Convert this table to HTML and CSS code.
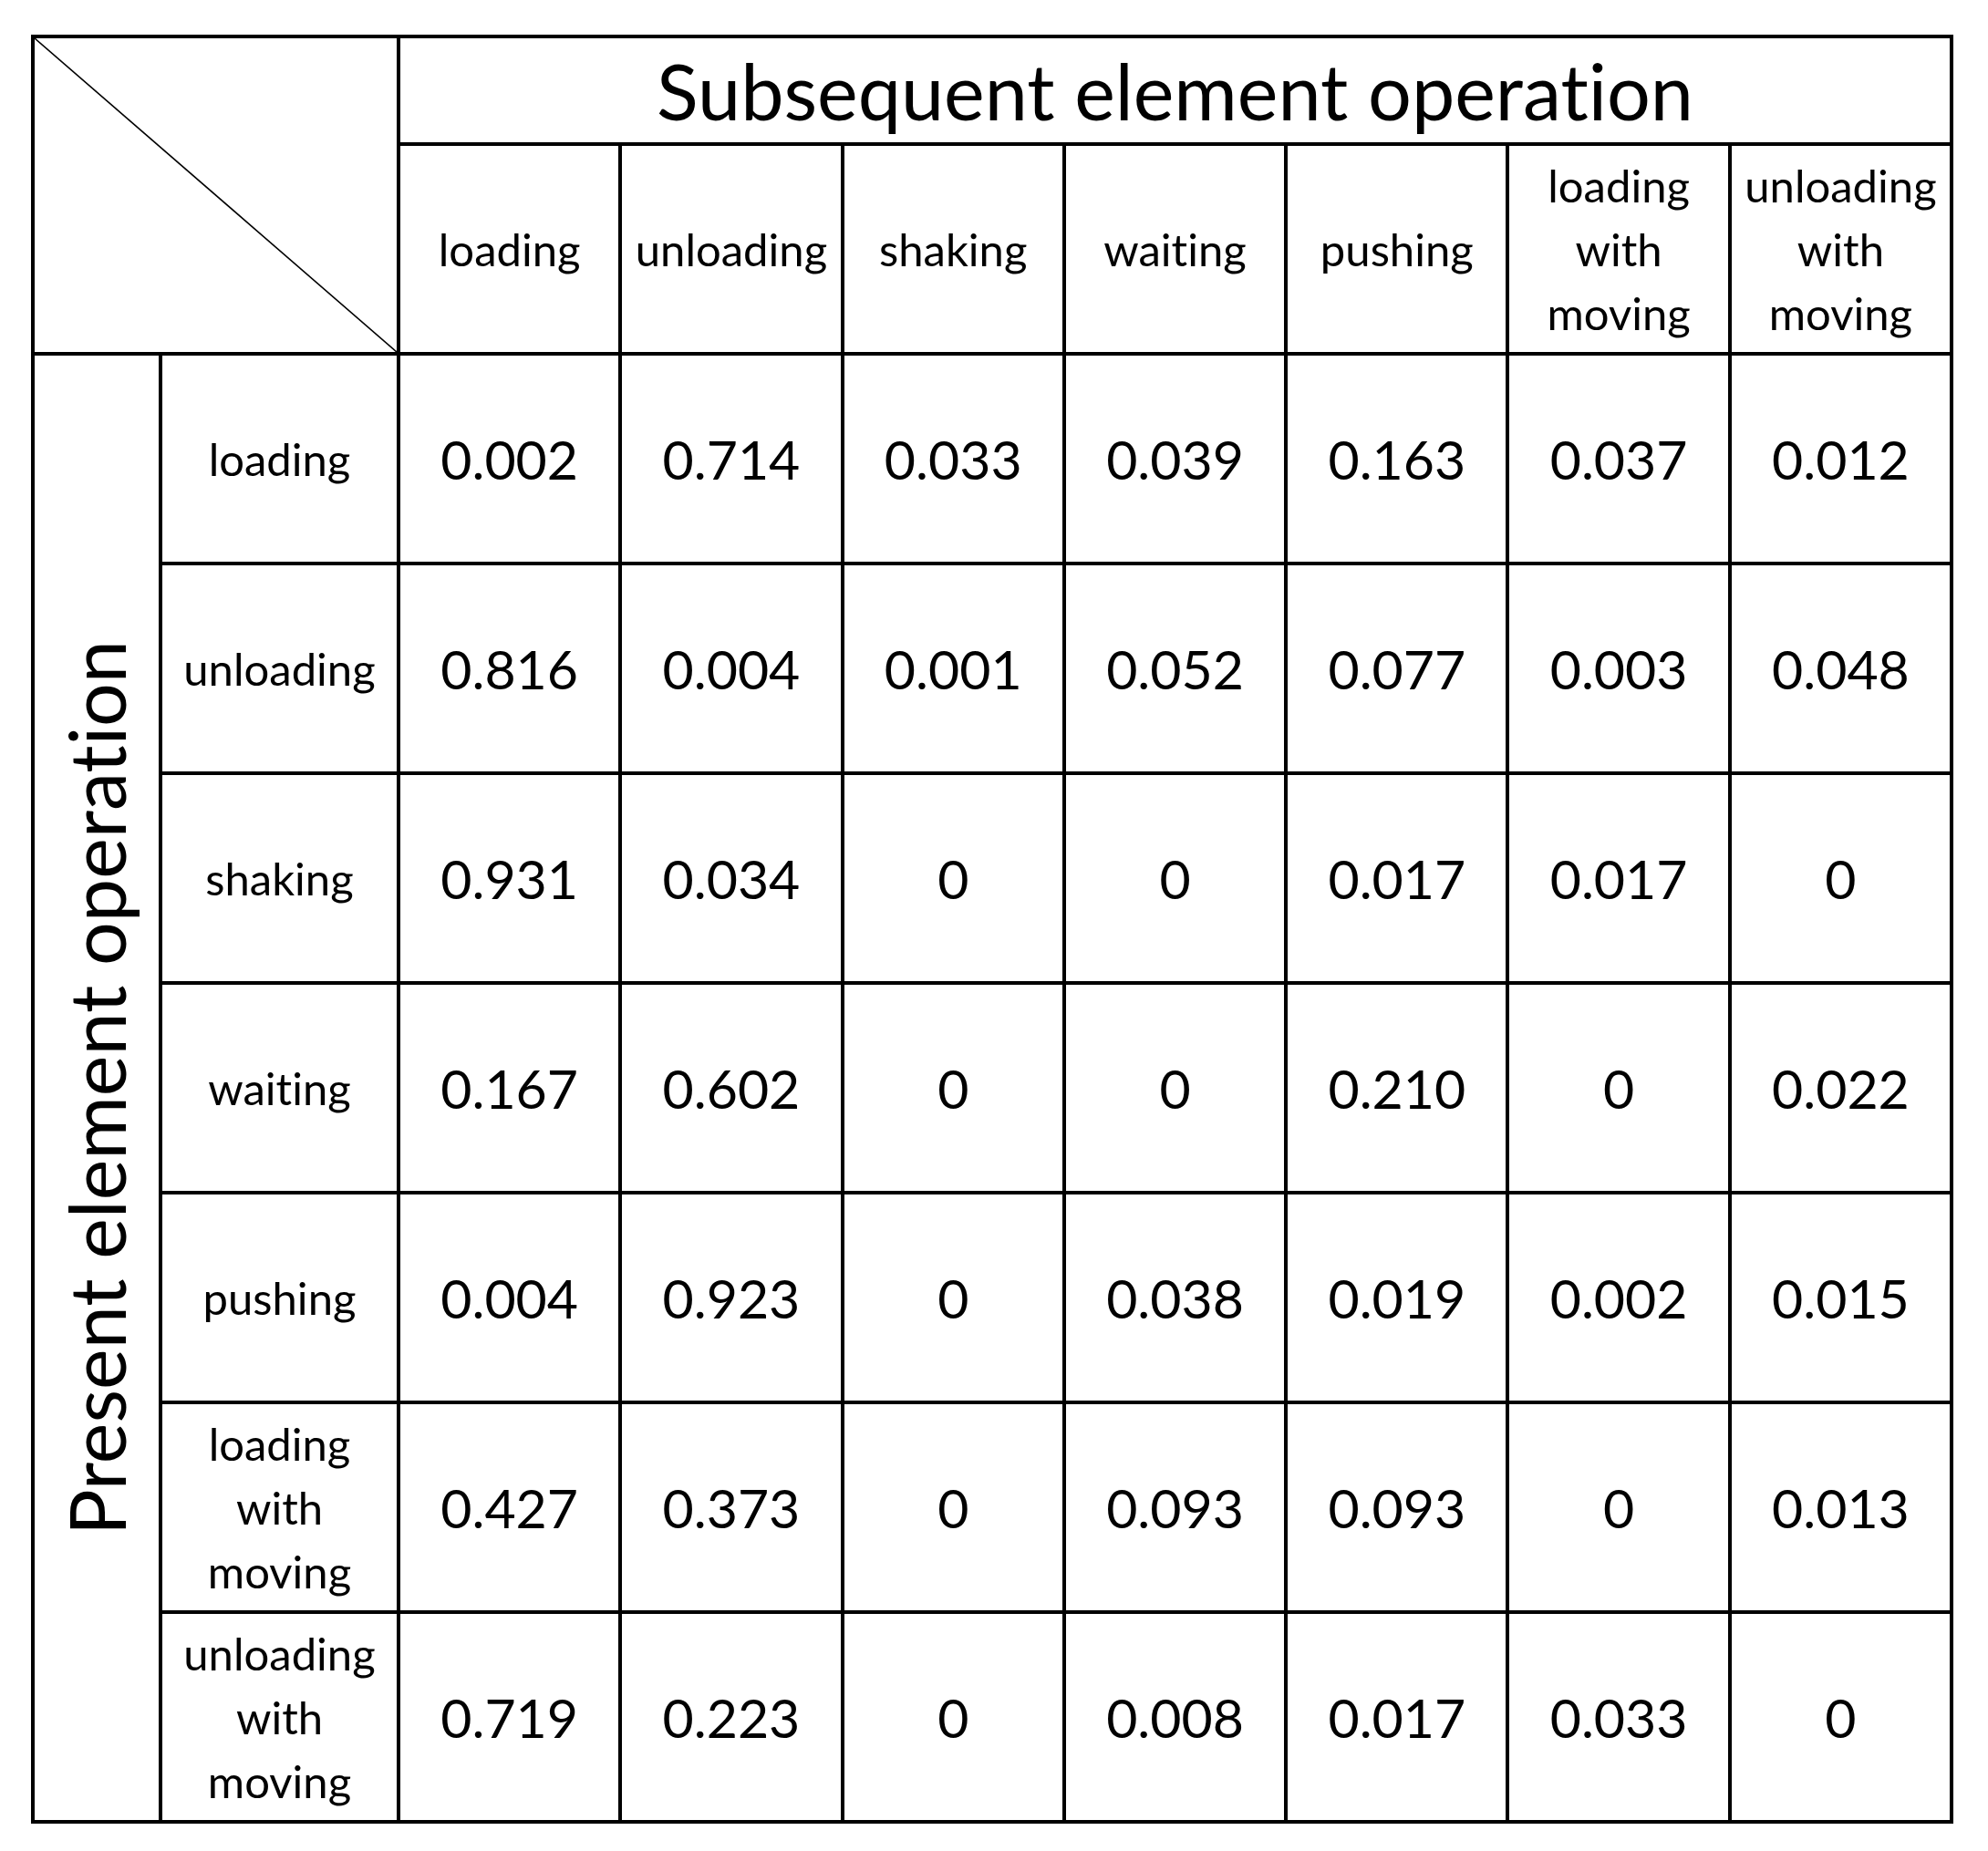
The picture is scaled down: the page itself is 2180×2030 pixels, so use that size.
FILE: index.html
```html
<!DOCTYPE html>
<html lang="en">
<head>
<meta charset="utf-8">
<title>Element operation transition matrix</title>
<link rel="stylesheet" href="styles.css">
</head>
<body>
<div class="page">
  <div class="matrix">
    <div class="corner">
      <svg class="diag" viewBox="0 0 100 100" preserveAspectRatio="none"><line x1="0" y1="0" x2="100" y2="100" vector-effect="non-scaling-stroke"/></svg>
    </div>
    <div class="title">Subsequent element operation</div>

    <div class="head">loading</div>
    <div class="head">unloading</div>
    <div class="head">shaking</div>
    <div class="head">waiting</div>
    <div class="head">pushing</div>
    <div class="head">loading<br>with<br>moving</div>
    <div class="head">unloading<br>with<br>moving</div>

    <div class="side"><span class="side-text">Present element operation</span></div>

    <div class="rowlab">loading</div>
    <div class="num">0.002</div><div class="num">0.714</div><div class="num">0.033</div><div class="num">0.039</div><div class="num">0.163</div><div class="num">0.037</div><div class="num">0.012</div>

    <div class="rowlab">unloading</div>
    <div class="num">0.816</div><div class="num">0.004</div><div class="num">0.001</div><div class="num">0.052</div><div class="num">0.077</div><div class="num">0.003</div><div class="num">0.048</div>

    <div class="rowlab">shaking</div>
    <div class="num">0.931</div><div class="num">0.034</div><div class="num">0</div><div class="num">0</div><div class="num">0.017</div><div class="num">0.017</div><div class="num">0</div>

    <div class="rowlab">waiting</div>
    <div class="num">0.167</div><div class="num">0.602</div><div class="num">0</div><div class="num">0</div><div class="num">0.210</div><div class="num">0</div><div class="num">0.022</div>

    <div class="rowlab">pushing</div>
    <div class="num">0.004</div><div class="num">0.923</div><div class="num">0</div><div class="num">0.038</div><div class="num">0.019</div><div class="num">0.002</div><div class="num">0.015</div>

    <div class="rowlab">loading<br>with<br>moving</div>
    <div class="num">0.427</div><div class="num">0.373</div><div class="num">0</div><div class="num">0.093</div><div class="num">0.093</div><div class="num">0</div><div class="num">0.013</div>

    <div class="rowlab">unloading<br>with<br>moving</div>
    <div class="num">0.719</div><div class="num">0.223</div><div class="num">0</div><div class="num">0.008</div><div class="num">0.017</div><div class="num">0.033</div><div class="num">0</div>
  </div>
</div>
</body>
</html>
```

FILE: styles.css
```css
html, body {
  margin: 0;
  padding: 0;
  background: #ffffff;
}

.page {
  padding: 38px 0 0 34px;
  font-family: Lato, "Liberation Sans", sans-serif;
  font-variant-ligatures: none;
  font-feature-settings: "liga" 0, "clig" 0;
  color: #000;
}

.matrix {
  display: grid;
  grid-template-columns: 136px 257px repeat(7, 239.3px);
  grid-template-rows: 114px 226px repeat(7, 226px);
  gap: 4px;
  padding: 4px;
  background: #000;
  width: max-content;
}

.matrix > div {
  background: #fff;
  display: flex;
  align-items: center;
  justify-content: center;
  text-align: center;
}

.corner {
  grid-column: 1 / 3;
  grid-row: 1 / 3;
}

.diag {
  display: block;
  width: 100%;
  height: 100%;
}

.diag line {
  stroke: #000;
  stroke-width: 1.6;
}

.title {
  grid-column: 3 / 10;
  grid-row: 1;
  font-size: 84.5px;
  line-height: 1;
  padding-top: 2px;
}

.head {
  font-size: 49px;
  line-height: 70px;
}

.side {
  grid-column: 1;
  grid-row: 3 / 10;
}

.side-text {
  writing-mode: vertical-rl;
  transform: rotate(180deg);
  font-size: 84.5px;
  line-height: 1;
  white-space: nowrap;
}

.rowlab {
  font-size: 49px;
  line-height: 70px;
}

.num {
  font-size: 59px;
  line-height: 1;
}
```
